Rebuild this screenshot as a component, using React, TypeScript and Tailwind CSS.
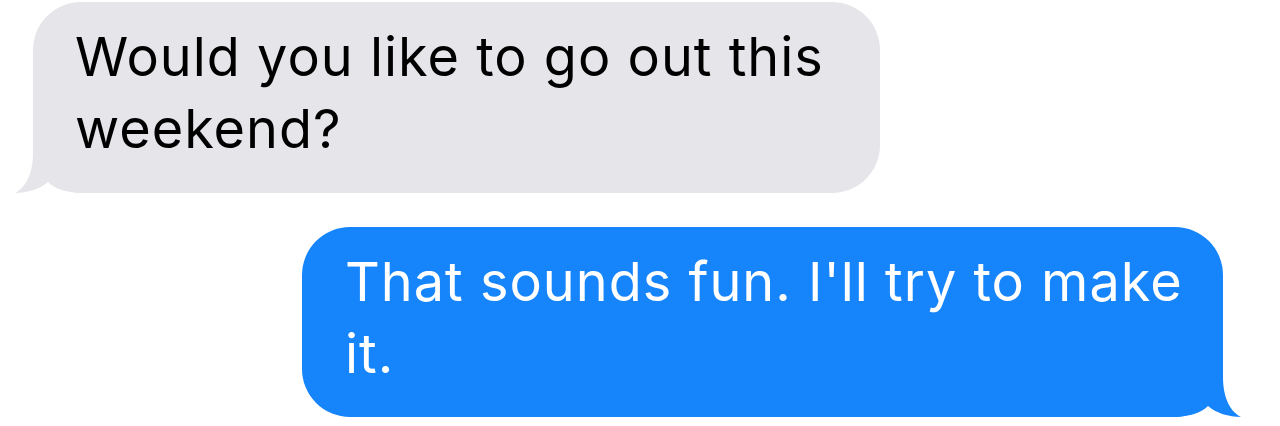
type Message = {
  id: number;
  text: string;
  fromMe: boolean;
};

const messages: Message[] = [
  { id: 1, text: "Would you like to go out this weekend?", fromMe: false },
  { id: 2, text: "That sounds fun. I'll try to make it.", fromMe: true },
];

// bubble tail, tip at x=0, body edge at x=18
const Tail = ({ color, flip }: { color: string; flip?: boolean }) => (
  <svg
    width="66"
    height="60"
    viewBox="0 0 66 60"
    className={
      flip
        ? "absolute bottom-0 right-[-18px] -scale-x-100"
        : "absolute bottom-0 left-[-18px]"
    }
  >
    <path
      d="M18,0 L18,20 C18,42 10,55 0,60 C12,60 25,56 33,49 C40,56 50,59 66,60 L66,0 Z"
      fill={color}
    />
  </svg>
);

const Bubble = ({ msg }: { msg: Message }) => {
  if (msg.fromMe) {
    return (
      <div className="relative self-end mr-[57px] w-[921px] rounded-[48px] bg-[#1685FB] pl-[43px] pr-[24px] pt-[19px] pb-[27px] text-white">
        <p className="text-[54px] leading-[72px] tracking-[1px]">{msg.text}</p>
        <Tail color="#1685FB" flip />
      </div>
    );
  }
  return (
    <div className="relative self-start ml-[33px] w-[847px] rounded-[48px] bg-[#E5E5EA] pl-[42px] pr-[24px] pt-[19px] pb-[28px] text-black">
      <p className="text-[54px] leading-[72px] tracking-[1px]">{msg.text}</p>
      <Tail color="#E5E5EA" />
    </div>
  );
};

export default function App() {
  return (
    <div className="w-[1280px] h-[426px] bg-white overflow-hidden pt-[2px] flex flex-col gap-[34px] font-['Inter','Noto_Sans',sans-serif]">
      {messages.map((m) => (
        <Bubble key={m.id} msg={m} />
      ))}
    </div>
  );
}
